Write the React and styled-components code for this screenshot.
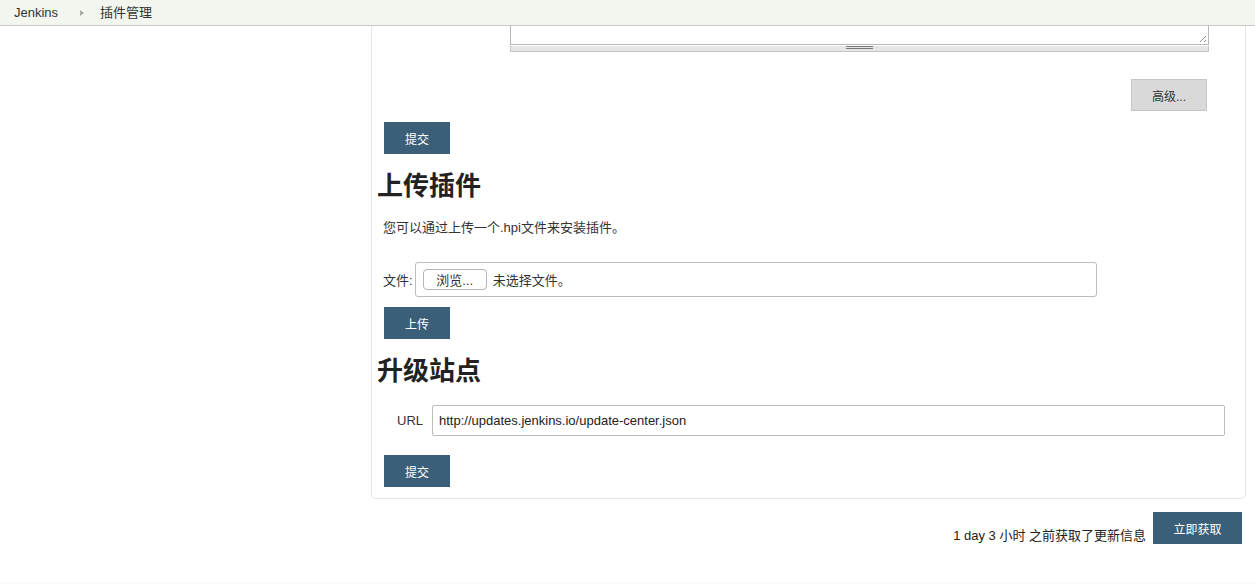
import React from 'react'
import styled, { createGlobalStyle } from 'styled-components'

const GlobalStyle = createGlobalStyle`
  body {
    margin: 0;
    background: #fff;
    font-family: "Liberation Sans", "Noto Sans CJK SC", Helvetica, Arial, sans-serif;
    font-size: 13px;
    color: #333;
  }
`

const Breadcrumbs = styled.div`
  height: 25px;
  background: #f2f6ee;
  border-bottom: 1px solid #c9ccc6;
  display: flex;
  align-items: center;
  padding-left: 14px;
  font-size: 13px;
  color: #333;
`

const Crumb = styled.span`
  line-height: 25px;
`

const Arrow = styled.span`
  margin: 0 16px 0 22px;
  width: 0;
  height: 0;
  border-top: 3px solid transparent;
  border-bottom: 3px solid transparent;
  border-left: 4px solid #a8aaa6;
`

const Page = styled.div`
  display: flex;
`

const SidePanel = styled.div`
  width: 371px;
  flex-shrink: 0;
`

const Main = styled.div`
  flex: 1;
  margin-right: 9px;
`

const Panel = styled.div`
  border: 1px solid #e6e6e6;
  border-top: none;
  border-radius: 0 0 5px 5px;
  padding: 0 0 11px 0;
`

const TextareaRow = styled.div`
  padding-left: 138px;
  padding-right: 36px;
`

const TextareaBox = styled.div`
  position: relative;
  height: 18px;
  border: 1px solid #b8b8b8;
  border-top: none;
  background: #fff;
`

const Grip = styled.div`
  position: absolute;
  right: 2px;
  bottom: 2px;
  width: 9px;
  height: 9px;
  background: repeating-linear-gradient(
    135deg,
    transparent 0 2px,
    #888 2px 3px
  );
  clip-path: polygon(100% 0, 100% 100%, 0 100%);
`

const ResizeBar = styled.div`
  height: 5px;
  margin-top: 1px;
  background: #e6e6e6;
  border: 1px solid #c4c4c4;
  border-top: none;
  display: flex;
  justify-content: center;
  align-items: flex-start;
`

const Handle = styled.div`
  width: 27px;
  height: 3px;
  border-top: 1px solid #777;
  border-bottom: 1px solid #777;
  box-sizing: border-box;
`

const AdvancedRow = styled.div`
  display: flex;
  justify-content: flex-end;
  padding-right: 38px;
  margin-top: 27px;
`

const GreyButton = styled.button`
  width: 76px;
  height: 32px;
  background: #d9d9d9;
  border: 1px solid #c6c6c6;
  font-family: inherit;
  font-size: 12px;
  color: #333;
  padding: 0;
`

const PrimaryButton = styled.button`
  width: ${({ wide }) => (wide ? '89px' : '66px')};
  height: 32px;
  background: #3b5f78;
  border: none;
  color: #fff;
  font-family: inherit;
  font-size: 12px;
  padding: 0;
  display: block;
`

const Section = styled.div`
  padding-left: 12px;
  margin-top: ${({ top }) => top}px;
`

const Heading = styled.h1`
  margin: ${({ top }) => top}px 0 0 5px;
  font-size: 26px;
  font-weight: bold;
  line-height: 30px;
  color: #222;
`

const Description = styled.p`
  margin: 18px 0 0 11px;
  line-height: 18px;
  font-size: 13px;
  color: #333;
`

const FieldRow = styled.div`
  display: flex;
  align-items: center;
  margin-top: ${({ top }) => top}px;
  padding-left: ${({ indent }) => indent}px;
`

const Label = styled.span`
  font-size: 13px;
  color: #333;
  margin-right: ${({ gap }) => gap}px;
`

const FileBox = styled.div`
  box-sizing: border-box;
  width: 682px;
  height: 35px;
  border: 1px solid #bcbcbc;
  border-radius: 3px;
  display: flex;
  align-items: center;
  padding-left: 7px;
  gap: 6px;
`

const BrowseButton = styled.span`
  width: 62px;
  height: 19px;
  border: 1px solid #b5b5b5;
  border-radius: 4px;
  background: #fff;
  display: flex;
  align-items: center;
  justify-content: center;
  font-size: 13px;
  color: #333;
`

const UrlInput = styled.div`
  flex: 1;
  box-sizing: border-box;
  height: 31px;
  margin-right: 20px;
  border: 1px solid #bcbcbc;
  border-radius: 2px;
  display: flex;
  align-items: center;
  padding-left: 6px;
  font-size: 13px;
  color: #222;
`

const StatusRow = styled.div`
  display: flex;
  justify-content: flex-end;
  align-items: flex-end;
  margin-top: 13px;
  padding-right: 4px;
  gap: 7px;
`

const StatusText = styled.span`
  font-size: 13px;
  line-height: 16px;
  color: #222;
`

const Footer = styled.div`
  margin-top: 39px;
  height: 1px;
  background: #fbfbf6;
  border-bottom: 1px solid #c9c9c4;
`

export default function App() {
  return (
    <>
      <GlobalStyle />
      <Breadcrumbs>
        <Crumb>Jenkins</Crumb>
        <Arrow />
        <Crumb>插件管理</Crumb>
      </Breadcrumbs>
      <Page>
        <SidePanel />
        <Main>
          <Panel>
            <TextareaRow>
              <TextareaBox>
                <Grip />
              </TextareaBox>
              <ResizeBar>
                <Handle />
              </ResizeBar>
            </TextareaRow>
            <AdvancedRow>
              <GreyButton>高级...</GreyButton>
            </AdvancedRow>
            <Section top={11}>
              <PrimaryButton>提交</PrimaryButton>
            </Section>
            <Heading top={17}>上传插件</Heading>
            <Description>您可以通过上传一个.hpi文件来安装插件。</Description>
            <FieldRow top={25} indent={11}>
              <Label gap={2}>文件:</Label>
              <FileBox>
                <BrowseButton>浏览...</BrowseButton>
                <span>未选择文件。</span>
              </FileBox>
            </FieldRow>
            <Section top={10}>
              <PrimaryButton>上传</PrimaryButton>
            </Section>
            <Heading top={17}>升级站点</Heading>
            <FieldRow top={19} indent={25}>
              <Label gap={9}>URL</Label>
              <UrlInput>http://updates.jenkins.io/update-center.json</UrlInput>
            </FieldRow>
            <Section top={19}>
              <PrimaryButton>提交</PrimaryButton>
            </Section>
          </Panel>
          <StatusRow>
            <StatusText>1 day 3 小时 之前获取了更新信息</StatusText>
            <PrimaryButton wide>立即获取</PrimaryButton>
          </StatusRow>
        </Main>
      </Page>
      <Footer />
    </>
  )
}
